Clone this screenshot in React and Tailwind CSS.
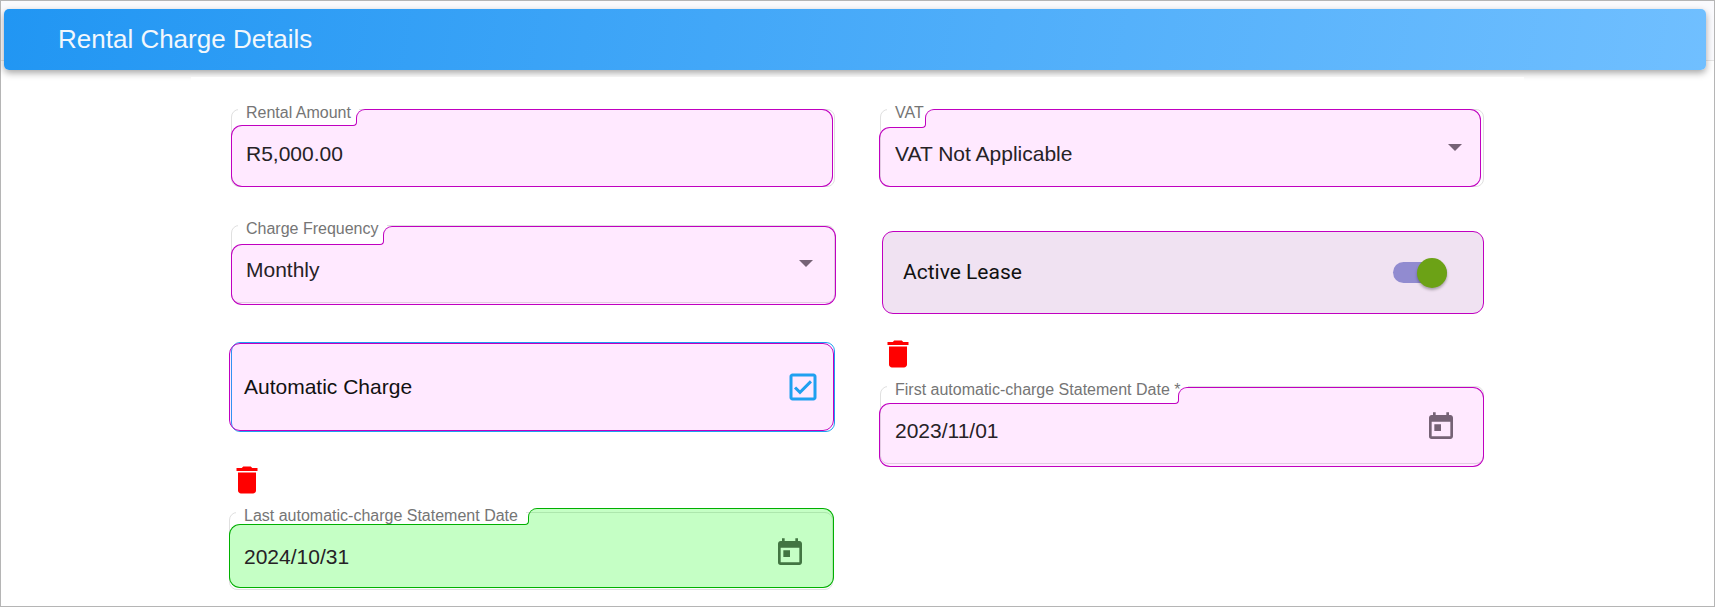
import React, { useState } from 'react';
import clsx from 'clsx';
import { MdDelete, MdOutlineCheckBox, MdOutlineCheckBoxOutlineBlank, MdToday } from 'react-icons/md';

const tones = {
  pink: {
    border: "border-[#c000c0]",
    fill: "bg-[#ff00ff16] bg-clip-padding",
    corner: "bg-[#ffe9ff]",
  },
  green: {
    border: "border-[#00b000]",
    fill: "bg-[#00ff003a] bg-clip-padding",
    corner: "bg-[#c5ffc5]",
  },
};

// Tinted shape behind a field, with a notch cut out for the floating label
const NotchedHighlight = ({ tone = "pink", inset, notchWidth, notchHeight }) => {
  const { border, fill, corner } = tones[tone];

  return (
    <div aria-hidden="true" className={clsx("absolute flex pointer-events-none", inset)}>
      <div className={clsx("flex flex-col shrink-0", notchWidth)}>
        <div className={clsx("shrink-0", notchHeight)} />
        <div className={clsx("relative grow border-l border-t border-b rounded-l-[11px]", border, fill)}>
          {/* Inner corner of the notch */}
          <span className={clsx("absolute -top-[5px] -right-px size-[5px]", corner)}>
            <span className={clsx("block size-full bg-white border-r border-b rounded-br-[4px]", border)} />
          </span>
        </div>
      </div>
      <div className="flex flex-col grow">
        <div className={clsx("shrink-0 border-t border-l border-r rounded-tl-[9px] rounded-tr-[11px]", notchHeight, border, fill)} />
        <div className={clsx("grow border-r border-b rounded-br-[11px]", border, fill)} />
      </div>
    </div>
  );
};

const Field = ({ id, label, children, ...highlight }) => (
  <div className="relative h-[78px]">
    <div aria-hidden="true" className="absolute inset-0 border border-[#e0e0e0] rounded-lg" />
    <div className="relative -top-1 h-4 pl-[7px] flex">
      <label htmlFor={id} className="bg-white px-2 text-base leading-4 text-[#757575] whitespace-nowrap">
        {label}
      </label>
    </div>
    <NotchedHighlight {...highlight} />
    <div className="relative -mt-[5px] h-[67px] flex items-center">{children}</div>
  </div>
);

const inputClass = "w-full h-full px-[15px] bg-transparent text-[21px] text-[#262226] outline-none appearance-none";

const SelectInput = ({ id, value, onChange, options }) => (
  <>
    <select id={id} value={value} onChange={(e) => onChange(e.target.value)} className={inputClass}>
      {options.map((option) => (
        <option key={option}>{option}</option>
      ))}
    </select>
    <svg viewBox="0 0 14 7" className="absolute right-[22px] top-[24px] w-[14px] h-[7px] pointer-events-none">
      <path d="M0 0h14L7 7z" fill="#756275" />
    </svg>
  </>
);

const DateInput = ({ id, value, onChange, iconClass }) => (
  <>
    <input id={id} type="text" value={value} onChange={(e) => onChange(e.target.value)} className={inputClass} />
    <button type="button" aria-label="Open calendar" className="mr-[27px] -mt-[7px] shrink-0">
      <MdToday className={clsx("size-8", iconClass)} />
    </button>
  </>
);

const ClearButton = ({ label }) => (
  <button type="button" aria-label={label} className="block mb-[14px] size-9 text-[#ff0000]">
    <MdDelete className="size-9" />
  </button>
);

const App = () => {
  const [amount, setAmount] = useState("R5,000.00");
  const [vat, setVat] = useState("VAT Not Applicable");
  const [frequency, setFrequency] = useState("Monthly");
  const [active, setActive] = useState(true);
  const [automatic, setAutomatic] = useState(true);
  const [firstDate, setFirstDate] = useState("2023/11/01");
  const [lastDate, setLastDate] = useState("2024/10/31");

  const CheckIcon = automatic ? MdOutlineCheckBox : MdOutlineCheckBoxOutlineBlank;

  return (
    <div className="min-h-screen bg-white border border-[#b5b5b5] font-['Liberation_Sans',Arial,sans-serif]">
      {/* Header */}
      <header className="h-[60px] pt-2 pl-[3px] pr-2 bg-[#fafafd] border-b border-[#e6e6e6]">
        <div className="h-[61px] flex items-center pl-[54px] rounded-[5px] bg-[linear-gradient(100deg,#2196f3,#70bfff)] shadow-[0_3px_7px_rgba(0,0,0,0.35)]">
          <h1 className="text-[26px] text-[#f2f7fc]">Rental Charge Details</h1>
        </div>
      </header>

      <form className="relative mt-4 mx-auto max-w-[1333px] px-10 pt-8 bg-white grid grid-cols-2 gap-x-[45px]">
        {/* Left column */}
        <div>
          <Field id="amount" label="Rental Amount" inset="inset-0 right-0.5" notchWidth="w-[125px]" notchHeight="h-4">
            <input id="amount" type="text" value={amount} onChange={(e) => setAmount(e.target.value)} className={inputClass} />
          </Field>

          <div className="mt-[38px]">
            <Field id="frequency" label="Charge Frequency" inset="top-px -bottom-0.5 left-0 -right-px" notchWidth="w-[152px]" notchHeight="h-[18px]">
              <SelectInput id="frequency" value={frequency} onChange={setFrequency} options={["Monthly", "Quarterly", "Annually"]} />
            </Field>
          </div>

          <div className="mt-[39px] -ml-0.5 mr-0.5">
            <div className="relative h-[90px]">
              <div aria-hidden="true" className="absolute inset-y-0 left-0.5 -right-0.5 border border-[#1ea0f0] rounded-[9px]" />
              <label className="absolute left-0 -right-px inset-y-px flex items-center justify-between pl-3.5 pr-3 border border-[#c000c0] rounded-[11px] bg-[#ff00ff16] bg-clip-padding text-[21px] text-[#111]">
                Automatic Charge
                <span className="relative size-9">
                  <input
                    type="checkbox"
                    checked={automatic}
                    onChange={(e) => setAutomatic(e.target.checked)}
                    className="absolute inset-0 size-9 appearance-none"
                  />
                  <CheckIcon className="size-9 text-[#20a0f0]" />
                </span>
              </label>
            </div>

            <div className="mt-[30px]">
              <ClearButton label="Clear last statement date" />
              <Field id="last-date" label="Last automatic-charge Statement Date" tone="green" inset="-top-1 bottom-0.5 left-0 -right-px" notchWidth="w-[299px]" notchHeight="h-4">
                <DateInput id="last-date" value={lastDate} onChange={setLastDate} iconClass="text-[#427542]" />
              </Field>
            </div>
          </div>
        </div>

        {/* Right column */}
        <div>
          <Field id="vat" label="VAT" inset="inset-y-0 -left-px right-[3px]" notchWidth="w-[46px]" notchHeight="h-[18px]">
            <SelectInput id="vat" value={vat} onChange={setVat} options={["VAT Not Applicable", "VAT Inclusive", "VAT Exclusive"]} />
          </Field>

          <label className="mt-11 ml-0.5 h-[83px] flex items-center justify-between pl-5 pr-9 border border-[#c000c0] rounded-[11px] bg-[#f0e2f2] font-[Roboto,sans-serif] text-[21px] text-[#111]">
            Active Lease
            <input
              type="checkbox"
              role="switch"
              checked={active}
              onChange={(e) => setActive(e.target.checked)}
              className="relative w-[54px] h-[21px] appearance-none rounded-full bg-[#918bd0] before:absolute before:-top-1 before:left-0 checked:before:left-6 before:size-[30px] before:rounded-full before:bg-[#6ca216] before:shadow-[0_2px_3px_rgba(0,0,0,0.3)]"
            />
          </label>

          <div className="mt-[22px]">
            <ClearButton label="Clear first statement date" />
            <Field id="first-date" label="First automatic-charge Statement Date *" inset="top-px -bottom-[3px] -left-px right-0" notchWidth="w-[299px]" notchHeight="h-4">
              <DateInput id="first-date" value={firstDate} onChange={setFirstDate} iconClass="text-[#756275]" />
            </Field>
          </div>
        </div>
      </form>
    </div>
  );
};

export default App;
